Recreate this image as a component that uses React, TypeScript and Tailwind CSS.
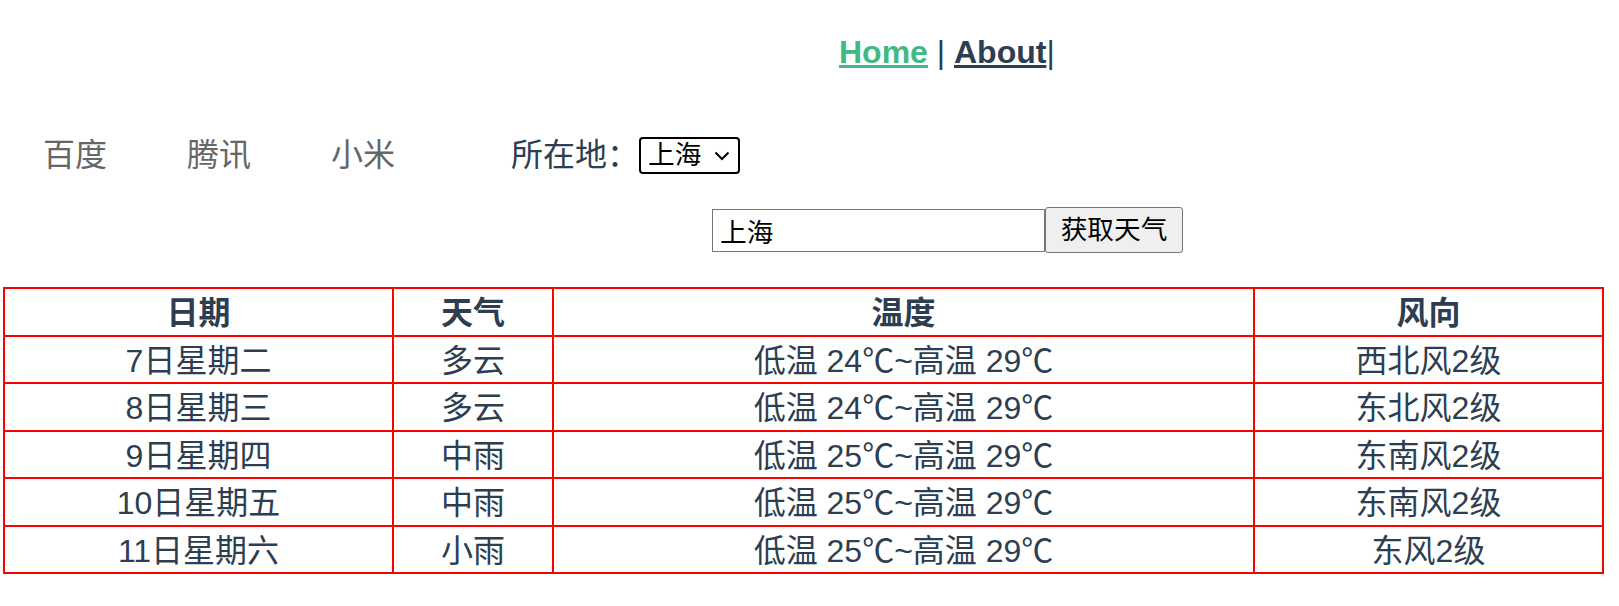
const forecast = [
  { date: "7日星期二", type: "多云", temp: "低温 24℃~高温 29℃", wind: "西北风2级" },
  { date: "8日星期三", type: "多云", temp: "低温 24℃~高温 29℃", wind: "东北风2级" },
  { date: "9日星期四", type: "中雨", temp: "低温 25℃~高温 29℃", wind: "东南风2级" },
  { date: "10日星期五", type: "中雨", temp: "低温 25℃~高温 29℃", wind: "东南风2级" },
  { date: "11日星期六", type: "小雨", temp: "低温 25℃~高温 29℃", wind: "东风2级" },
]

const cell = "border-2 border-[#f00] p-0 pt-[4px]"

export default function App() {
  return (
    <div className="min-h-screen bg-white font-['Liberation_Sans','Noto_Sans_CJK_SC',sans-serif] text-[32px] text-[#2c3e50]">
      <nav className="pl-[839px] pt-[34px] leading-[37px] whitespace-pre">
        <a href="#/" className="font-bold text-[#42b983] underline">Home</a> | <a href="#/about" className="font-bold underline">About</a>|
      </nav>

      <div className="mt-[66px] flex h-[37px] items-center pl-[43px] leading-[37px]">
        <div className="flex gap-[80px] text-[#666]">
          <a href="#">百度</a>
          <a href="#">腾讯</a>
          <a href="#">小米</a>
        </div>
        <label className="ml-[116px] flex items-center">
          所在地：
          <span className="relative">
            <select
              defaultValue="上海"
              className="block h-[37px] w-[101px] appearance-none rounded-[4px] border-2 border-black bg-white pl-[7px] text-[26.67px] leading-[33px] text-black"
            >
              <option>上海</option>
              <option>北京</option>
              <option>广州</option>
            </select>
            {/* select arrow */}
            <svg
              viewBox="0 0 16 10"
              className="pointer-events-none absolute right-[10px] top-[14px] h-[10px] w-[16px]"
              fill="none"
              stroke="black"
              strokeWidth="2"
            >
              <path d="M1.5 1.5 L8 8 L14.5 1.5" />
            </svg>
          </span>
        </label>
      </div>

      <div className="mt-[33px] flex h-[46px] items-center pl-[712px]">
        <input
          defaultValue="上海"
          className="h-[43px] w-[333px] border border-[#767676] px-[7px] text-[26.67px] text-black outline-none"
        />
        <button className="h-[46px] w-[138px] rounded-[3px] border border-[#767676] bg-[#efefef] text-[26.67px] text-black">
          获取天气
        </button>
      </div>

      <table className="mt-[34px] ml-[3px] w-[1599px] table-fixed border-collapse text-center leading-[37px]">
        <colgroup>
          <col className="w-[389px]" />
          <col className="w-[160px]" />
          <col className="w-[701px]" />
          <col className="w-[349px]" />
        </colgroup>
        <thead>
          <tr className="h-[47.5px]">
            <th className={`${cell} font-bold`}>日期</th>
            <th className={`${cell} font-bold`}>天气</th>
            <th className={`${cell} font-bold`}>温度</th>
            <th className={`${cell} font-bold`}>风向</th>
          </tr>
        </thead>
        <tbody>
          {forecast.map((d) => (
            <tr key={d.date} className="h-[47.5px]">
              <td className={cell}>{d.date}</td>
              <td className={cell}>{d.type}</td>
              <td className={cell}>{d.temp}</td>
              <td className={cell}>{d.wind}</td>
            </tr>
          ))}
        </tbody>
      </table>
    </div>
  )
}
